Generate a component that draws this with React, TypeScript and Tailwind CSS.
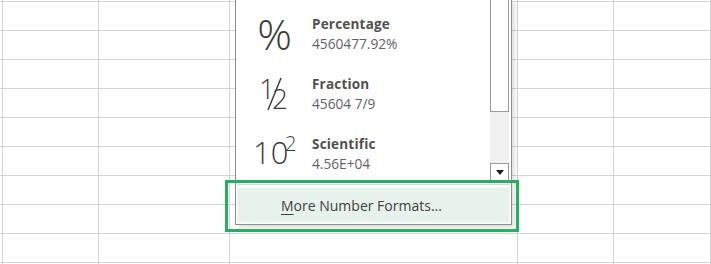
import React from 'react';

const COLS = [3, 96, 131, 288, 96, 97, 20];
const ROWS = [2, 29, 29, 29, 29, 29, 29, 29, 29, 29, 20];

const formats = [
  { key: 'pct', title: 'Percentage', value: '4560477.92%' },
  { key: 'frac', title: 'Fraction', value: '45604 7/9' },
  { key: 'sci', title: 'Scientific', value: '4.56E+04' },
];

const glyph = { fontFamily: '"Open Sans", "Noto Sans", sans-serif', fontWeight: 300, fill: '#3b3b3b' };

function FormatIcon({ kind }: { kind: string }) {
  if (kind === 'pct') {
    return (
      <svg width="40" height="36" viewBox="0 0 40 36" overflow="visible">
        <text x="20.5" y="34" textAnchor="middle" fontSize="43" style={glyph}>%</text>
      </svg>
    );
  }
  if (kind === 'frac') {
    return (
      <svg width="40" height="36" viewBox="0 0 40 36" overflow="visible">
        <text x="5" y="23" fontSize="28" style={glyph}>1</text>
        <line x1="14" y1="34" x2="27" y2="2" stroke="#3b3b3b" strokeWidth="1.4" />
        <text x="18" y="33" fontSize="28" style={glyph}>2</text>
      </svg>
    );
  }
  return (
    <svg width="40" height="36" viewBox="0 0 40 36" overflow="visible">
      <text x="-1" y="28" fontSize="31" style={glyph}>10</text>
      <text x="31" y="15" fontSize="20" style={glyph}>2</text>
    </svg>
  );
}

export default function App() {
  return (
    <div className="relative w-[711px] h-[264px] overflow-hidden bg-white font-['Open_Sans','Noto_Sans',sans-serif]">
      {/* sheet grid */}
      <div className="grid grid-cols-[3px_96px_131px_288px_96px_97px_20px] grid-rows-[2px_29px_29px_29px_29px_29px_29px_29px_29px_29px_20px]">
        {ROWS.map((_, r) =>
          COLS.map((_, c) => (
            <div key={`${r}-${c}`} className="border-r border-b border-[#d4d4d4]" />
          ))
        )}
      </div>

      {/* number format dropdown */}
      <div className="absolute left-[235px] top-[-1px] w-[277px] h-[226px] border border-[#8c8c8c] bg-white shadow-[3px_3px_4px_rgba(0,0,0,0.12)]">
        <div className="flex h-[184px]">
          <div className="flex-1 pt-[4px]">
            {formats.map((f) => (
              <div key={f.key} className="flex items-center h-[60px]">
                <div className="ml-[18px] w-[40px] h-[36px] shrink-0">
                  <FormatIcon kind={f.key} />
                </div>
                <div className="ml-[18px] flex flex-col">
                  <span className="text-[13.5px] leading-[20px] font-bold tracking-[0.2px] text-[#505050]">{f.title}</span>
                  <span className="text-[13.7px] leading-[20px] text-[#665f6a]">{f.value}</span>
                </div>
              </div>
            ))}
          </div>
          <div className="w-[19px] mr-[2px] flex flex-col bg-[#f0f0f0]">
            <div className="h-[112px] bg-white border-x border-b border-[#999999]" />
            <div className="flex-1" />
            <div className="h-[19px] mb-[2px] bg-white border border-[#999999] flex items-center justify-center">
              <svg width="8" height="5" viewBox="0 0 8 5">
                <path d="M0 0H8L4 5Z" fill="#1f1f1f" />
              </svg>
            </div>
          </div>
        </div>
        <div className="h-px mx-[1px] bg-[#d6d6d6]" />
        <div className="mt-[2px] mx-[1px] h-[36px] pl-[43px] bg-[#e8f2ec] border border-[#f2f8f4] flex items-center text-[14px] text-[#3f3f3f]">
          <span>
            <span className="underline underline-offset-[3px]">M</span>ore Number Formats...
          </span>
        </div>
      </div>

      {/* highlight frame */}
      <div className="absolute left-[225px] top-[180px] w-[294px] h-[52px] border-[3px] border-[#27ae60]" />
    </div>
  );
}
